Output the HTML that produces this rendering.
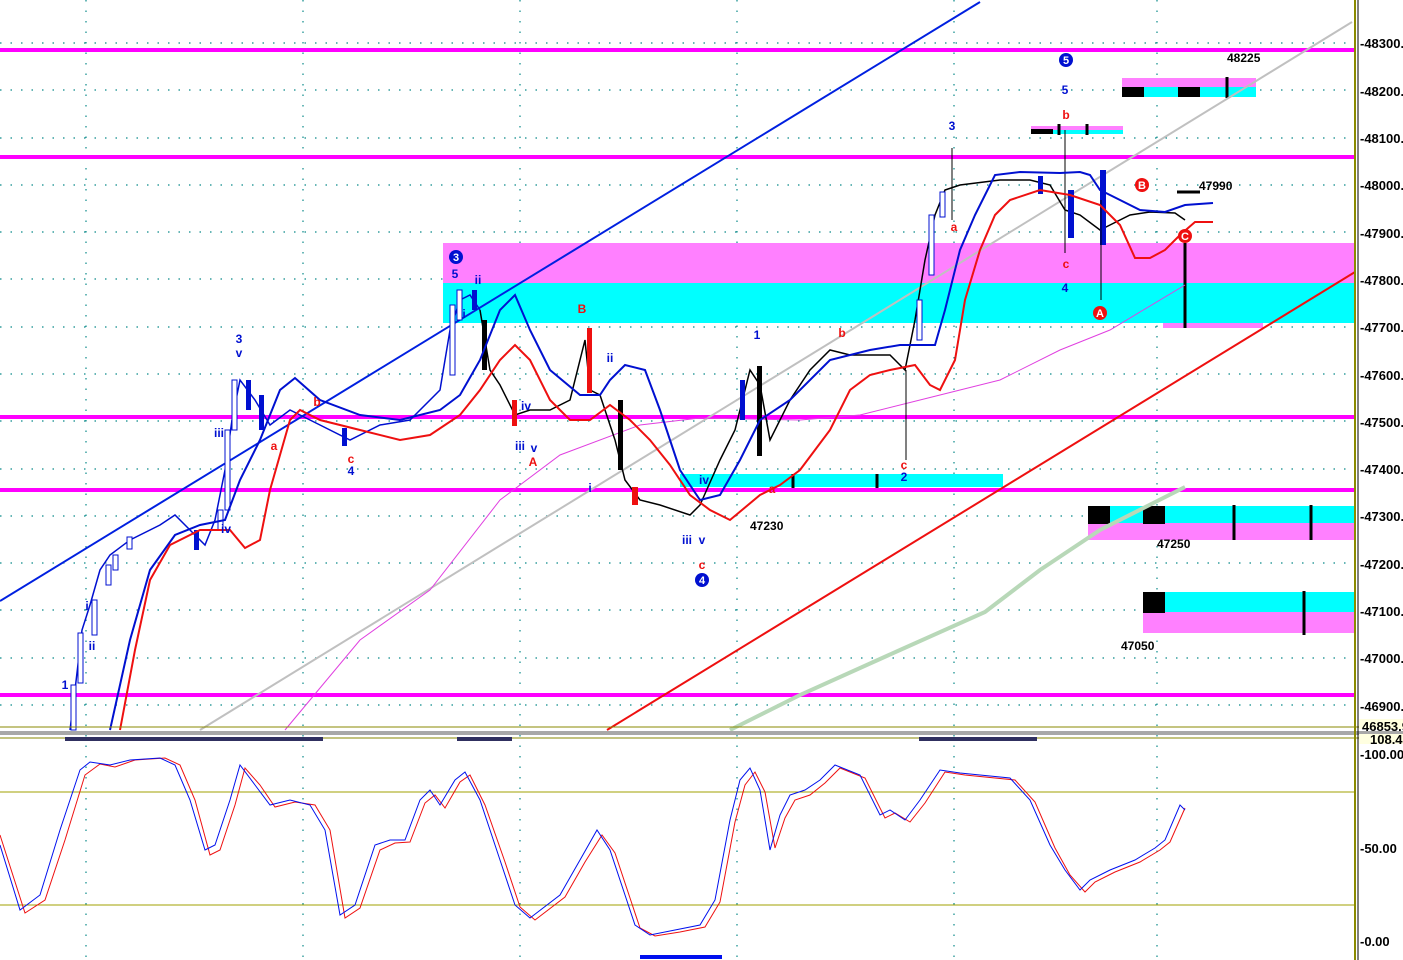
<!DOCTYPE html>
<html><head><meta charset="utf-8"><style>
html,body{margin:0;padding:0;background:#fff;}
svg{display:block;font-family:"Liberation Sans",sans-serif;}
</style></head><body>
<svg width="1403" height="960" viewBox="0 0 1403 960" xmlns="http://www.w3.org/2000/svg">
<!-- grid -->
<g stroke="#0a8a8a" stroke-width="1.2" stroke-dasharray="1.5 9">
<line x1="0" y1="43" x2="1355" y2="43"/><line x1="0" y1="90" x2="1355" y2="90"/><line x1="0" y1="138" x2="1355" y2="138"/>
<line x1="0" y1="185" x2="1355" y2="185"/><line x1="0" y1="232" x2="1355" y2="232"/><line x1="0" y1="279" x2="1355" y2="279"/>
<line x1="0" y1="327" x2="1355" y2="327"/><line x1="0" y1="374" x2="1355" y2="374"/><line x1="0" y1="421" x2="1355" y2="421"/>
<line x1="0" y1="469" x2="1355" y2="469"/><line x1="0" y1="516" x2="1355" y2="516"/><line x1="0" y1="563" x2="1355" y2="563"/>
<line x1="0" y1="610" x2="1355" y2="610"/><line x1="0" y1="658" x2="1355" y2="658"/><line x1="0" y1="705" x2="1355" y2="705"/>
<line x1="86" y1="0" x2="86" y2="960"/><line x1="303" y1="0" x2="303" y2="960"/><line x1="520" y1="0" x2="520" y2="960"/>
<line x1="737" y1="0" x2="737" y2="960"/><line x1="954" y1="0" x2="954" y2="960"/><line x1="1157" y1="0" x2="1157" y2="960"/>
</g>
<!-- zones -->
<rect x="443" y="243" width="912" height="40" fill="#ff80ff"/>
<rect x="443" y="283" width="912" height="40" fill="#00ffff"/>
<rect x="1163" y="323" width="100" height="5" fill="#ff80ff"/>
<rect x="680" y="474" width="323" height="13" fill="#00ffff"/>
<rect x="1088" y="506" width="267" height="18" fill="#00ffff"/>
<rect x="1088" y="523" width="267" height="17" fill="#ff80ff"/>
<rect x="1088" y="506" width="22" height="18" fill="#000"/><rect x="1143" y="506" width="22" height="18" fill="#000"/>
<rect x="1143" y="592" width="212" height="21" fill="#00ffff"/>
<rect x="1143" y="612" width="212" height="21" fill="#ff80ff"/>
<rect x="1143" y="592" width="22" height="21" fill="#000"/>
<rect x="1122" y="78" width="134" height="10" fill="#ff80ff"/>
<rect x="1122" y="87" width="134" height="10" fill="#00ffff"/>
<rect x="1122" y="87" width="22" height="10" fill="#000"/><rect x="1178" y="87" width="22" height="10" fill="#000"/>
<rect x="1031" y="126" width="92" height="4" fill="#ff80ff"/>
<rect x="1031" y="130" width="92" height="4" fill="#00ffff"/>
<rect x="1031" y="129" width="22" height="5" fill="#000"/>
<g stroke="#000" stroke-width="3">
<line x1="1227" y1="77" x2="1227" y2="98"/><line x1="1059" y1="124" x2="1059" y2="135"/><line x1="1087" y1="124" x2="1087" y2="135"/>
<line x1="1234" y1="505" x2="1234" y2="540"/><line x1="1311" y1="505" x2="1311" y2="540"/><line x1="1304" y1="591" x2="1304" y2="635"/>
<line x1="793" y1="474" x2="793" y2="490"/><line x1="877" y1="474" x2="877" y2="490"/>
<line x1="1185" y1="243" x2="1185" y2="328"/><line x1="1177" y1="192" x2="1200" y2="192"/>
</g>
<!-- magenta levels -->
<g fill="#ff00ff">
<rect x="0" y="48" width="1355" height="4"/><rect x="0" y="155" width="1355" height="4"/>
<rect x="0" y="415" width="1355" height="4"/><rect x="0" y="488" width="1355" height="4"/>
<rect x="0" y="693" width="1355" height="4"/>
</g>
<!-- trend lines -->
<line x1="0" y1="601" x2="980" y2="2" stroke="#0020e0" stroke-width="2"/>
<line x1="607" y1="730" x2="1355" y2="272" stroke="#ee1010" stroke-width="2"/>
<line x1="200" y1="730" x2="1352" y2="22" stroke="#c0c0c0" stroke-width="2"/>
<polyline fill="none" stroke="#e040e0" stroke-width="1" points="285,730 360,640 430,590 500,500 560,455 640,425 700,418 800,420 860,415 940,395 1000,380 1060,350 1110,330 1185,285"/>
<polyline fill="none" stroke="#b8d8b8" stroke-width="4" points="730,730 800,695 900,650 985,612 1040,570 1100,530 1185,487"/>
<!-- price -->
<polyline fill="none" stroke="#0010d0" stroke-width="1.5" points="70,730 75,690 82,630 90,605 100,570 110,555 130,540 160,525 175,515 190,530 205,545 215,520 225,470 232,420 240,380 255,400 270,425 290,410 320,425 350,440 380,425 410,420 440,390 450,330 460,300 470,295 480,310"/>
<polyline fill="none" stroke="#000" stroke-width="1.5" points="480,310 490,370 500,385 515,415 530,410 550,410 570,400 585,340 590,390 600,395 615,440 625,480 640,500 660,505 690,515 700,505 720,460 735,430 750,370 760,385 770,440 790,400 810,370 830,350 850,355 870,355 890,355 905,370 915,320 925,260 935,215 945,190 960,185 1000,180 1030,180 1050,185 1065,210 1080,215 1100,230 1110,225 1130,215 1150,212 1175,213 1185,220"/>
<g fill="#fff" stroke="#0010d0" stroke-width="1">
<rect x="71" y="685" width="5" height="45"/><rect x="78" y="633" width="5" height="50"/><rect x="92" y="600" width="5" height="35"/>
<rect x="106" y="565" width="5" height="20"/><rect x="113" y="555" width="5" height="15"/><rect x="127" y="537" width="5" height="12"/>
<rect x="218" y="510" width="5" height="20"/><rect x="225" y="430" width="5" height="80"/><rect x="232" y="380" width="5" height="50"/>
<rect x="450" y="305" width="5" height="70"/><rect x="457" y="290" width="5" height="30"/><rect x="917" y="300" width="5" height="40"/>
<rect x="929" y="215" width="5" height="60"/><rect x="940" y="192" width="5" height="25"/>
</g>
<g fill="#0010d0">
<rect x="740" y="380" width="5" height="40"/><rect x="194" y="530" width="5" height="20"/><rect x="342" y="428" width="5" height="18"/>
<rect x="1068" y="190" width="6" height="48"/><rect x="1100" y="170" width="6" height="75"/><rect x="1038" y="176" width="5" height="18"/>
<rect x="246" y="380" width="5" height="30"/><rect x="259" y="395" width="5" height="35"/><rect x="472" y="290" width="5" height="20"/>
</g>
<g fill="#000"><rect x="482" y="320" width="5" height="50"/><rect x="618" y="400" width="5" height="70"/><rect x="757" y="366" width="5" height="90"/></g>
<g fill="#ee1010"><rect x="512" y="400" width="5" height="26"/><rect x="587" y="328" width="5" height="65"/><rect x="632" y="487" width="6" height="18"/></g>
<g stroke="#000" stroke-width="1"><line x1="1065" y1="130" x2="1065" y2="253"/><line x1="906" y1="370" x2="906" y2="460"/><line x1="1101" y1="200" x2="1101" y2="300"/><line x1="952" y1="148" x2="952" y2="220"/></g>
<!-- MAs -->
<polyline fill="none" stroke="#0010d0" stroke-width="2" points="110,730 130,640 150,570 175,535 200,525 225,520 240,480 260,440 280,390 295,378 320,400 360,415 400,420 440,410 460,395 480,360 500,310 515,295 530,330 550,370 580,395 600,395 610,380 625,365 645,370 660,410 680,470 700,500 720,495 740,460 760,420 790,400 830,360 870,350 900,345 935,345 945,310 960,250 975,215 995,175 1020,172 1060,173 1080,172 1090,175 1100,190 1120,200 1140,210 1165,212 1185,205 1213,203"/>
<polyline fill="none" stroke="#ee1010" stroke-width="2" points="120,730 135,650 150,580 170,545 200,530 230,530 245,548 260,540 270,490 290,420 300,410 320,420 360,430 400,440 430,435 460,415 480,390 500,360 515,345 530,360 550,400 570,420 590,420 610,405 630,420 650,440 670,465 690,495 710,510 730,520 760,495 780,485 800,470 830,430 850,390 870,375 890,370 915,365 930,385 940,390 955,360 965,300 980,250 995,215 1010,200 1040,190 1070,195 1100,205 1120,225 1135,258 1150,258 1165,250 1180,235 1195,222 1213,222"/>
<!-- labels -->
<g font-size="12" font-weight="bold" fill="#0010d0" text-anchor="middle">
<text x="65" y="689">1</text><text x="92" y="650">ii</text><text x="87" y="610">i</text><text x="219" y="437">iii</text><text x="226" y="533">iv</text>
<text x="239" y="343">3</text><text x="239" y="357">v</text><text x="351" y="475">4</text><text x="455" y="278">5</text><text x="464" y="318">i</text><text x="478" y="284">ii</text>
<text x="526" y="410">iv</text><text x="520" y="450">iii</text><text x="534" y="452">v</text><text x="610" y="362">ii</text><text x="590" y="492">i</text>
<text x="704" y="484">iv</text><text x="687" y="544">iii</text><text x="702" y="544">v</text><text x="757" y="339">1</text><text x="904" y="481">2</text>
<text x="952" y="130">3</text><text x="1065" y="94">5</text><text x="1065" y="292">4</text>
</g>
<g font-size="12" font-weight="bold" fill="#ee1010" text-anchor="middle">
<text x="274" y="450">a</text><text x="317" y="406">b</text><text x="351" y="463">c</text><text x="582" y="313">B</text><text x="533" y="466">A</text>
<text x="702" y="569">c</text><text x="842" y="337">b</text><text x="772" y="493">a</text><text x="904" y="469">c</text><text x="954" y="231">a</text>
<text x="1066" y="119">b</text><text x="1066" y="268">c</text>
</g>
<g font-size="12" font-weight="bold" fill="#000">
<text x="1227" y="62">48225</text><text x="1199" y="190">47990</text><text x="750" y="530">47230</text><text x="1157" y="548">47250</text><text x="1121" y="650">47050</text>
</g>
<g font-size="11" font-weight="bold" text-anchor="middle">
<circle cx="456" cy="257" r="7" fill="#0010d0"/><text x="456" y="261" fill="#fff">3</text>
<circle cx="702" cy="580" r="7" fill="#0010d0"/><text x="702" y="584" fill="#fff">4</text>
<circle cx="1066" cy="60" r="7" fill="#0010d0"/><text x="1066" y="64" fill="#fff">5</text>
<circle cx="1100" cy="313" r="7" fill="#ee1010"/><text x="1100" y="317" fill="#fff">A</text>
<circle cx="1142" cy="185" r="7" fill="#ee1010"/><text x="1142" y="189" fill="#fff">B</text>
<circle cx="1185" cy="236" r="7" fill="#ee1010"/><text x="1185" y="240" fill="#fff">C</text>
</g>
<!-- separators -->
<line x1="0" y1="727" x2="1403" y2="727" stroke="#8a8a00" stroke-width="1"/>
<rect x="0" y="731" width="1403" height="4" fill="#a8a8a8"/>
<line x1="0" y1="738" x2="1403" y2="738" stroke="#8a8a00" stroke-width="1"/>
<g fill="#303060"><rect x="65" y="737" width="258" height="4"/><rect x="457" y="737" width="55" height="4"/><rect x="919" y="737" width="118" height="4"/></g>
<!-- lower panel -->
<line x1="0" y1="792" x2="1355" y2="792" stroke="#a0a000" stroke-width="1"/>
<line x1="0" y1="905" x2="1355" y2="905" stroke="#a0a000" stroke-width="1"/>
<polyline fill="none" stroke="#ee1010" stroke-width="1" points="0,835 25,913 45,900 65,840 85,775 100,764 115,767 135,760 165,758 180,765 195,800 210,855 220,850 235,805 245,768 260,785 275,807 295,802 315,805 330,830 345,918 360,908 380,850 395,843 410,842 425,803 435,795 445,808 460,782 470,775 485,805 505,862 520,907 535,920 565,897 585,862 602,835 615,853 630,898 640,928 655,936 680,932 705,927 720,902 735,822 745,785 755,772 765,792 775,848 785,818 795,800 810,795 825,783 840,768 865,778 885,818 895,813 910,822 925,803 945,772 965,775 985,777 1015,780 1035,802 1055,848 1070,875 1085,892 1095,882 1115,872 1140,862 1160,850 1170,842 1185,808"/>
<polyline fill="none" stroke="#0010ee" stroke-width="1" points="0,845 20,910 40,895 60,830 80,770 90,762 110,765 130,760 160,758 175,765 190,800 205,850 215,845 230,800 240,765 255,785 270,805 290,800 310,805 325,830 340,915 355,905 375,845 390,840 405,840 420,800 430,790 440,805 455,780 465,772 480,800 500,860 515,905 530,918 560,895 580,860 597,830 610,850 625,895 635,925 650,935 675,930 700,925 715,900 730,820 740,780 750,768 760,790 770,850 780,815 790,795 805,790 820,780 835,765 860,775 880,815 890,810 905,820 920,800 940,770 960,773 980,775 1010,778 1030,800 1050,845 1065,870 1080,890 1090,880 1110,870 1135,860 1155,848 1165,840 1180,805 1185,810"/>
<rect x="640" y="955" width="82" height="4" fill="#0010ee"/>
<!-- axis -->
<line x1="1355" y1="0" x2="1355" y2="960" stroke="#8a8a00" stroke-width="2"/>
<line x1="1358" y1="0" x2="1358" y2="960" stroke="#000" stroke-width="1"/>
<g font-size="13" font-weight="bold" fill="#000">
<text x="1360" y="48">-48300.</text><text x="1360" y="96">-48200.</text><text x="1360" y="143">-48100.</text><text x="1360" y="190">-48000.</text>
<text x="1360" y="238">-47900.</text><text x="1360" y="285">-47800.</text><text x="1360" y="332">-47700.</text><text x="1360" y="380">-47600.</text>
<text x="1360" y="427">-47500.</text><text x="1360" y="474">-47400.</text><text x="1360" y="521">-47300.</text><text x="1360" y="569">-47200.</text>
<text x="1360" y="616">-47100.</text><text x="1360" y="663">-47000.</text><text x="1360" y="711">-46900.</text>
<text x="1360" y="759">-100.00</text><text x="1360" y="853">-50.00</text><text x="1360" y="946">-0.00</text>
</g>
<rect x="1359" y="719" width="44" height="10" fill="#ffffe0"/>
<text x="1362" y="731" font-size="13" font-weight="bold" fill="#000">46853.9</text>
<rect x="1359" y="734" width="44" height="10" fill="#ffffe0"/>
<text x="1370" y="744" font-size="13" font-weight="bold" fill="#000">108.4</text>
</svg>
</body></html>
